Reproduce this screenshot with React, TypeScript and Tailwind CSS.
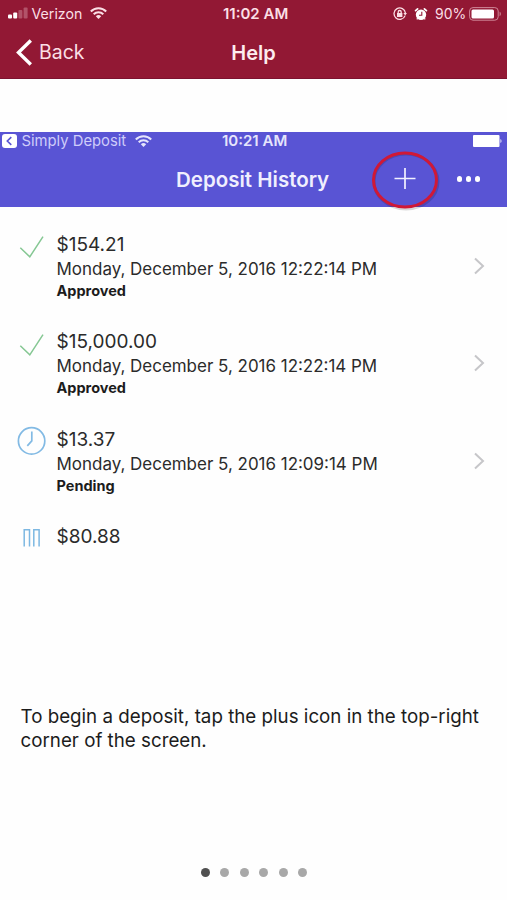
type DepositStatus = 'approved' | 'pending' | 'paused';

interface Deposit {
  amount: string;
  date?: string;
  label?: string;
  status: DepositStatus;
}

const deposits: Deposit[] = [
  { amount: '$154.21', date: 'Monday, December 5, 2016 12:22:14 PM', label: 'Approved', status: 'approved' },
  { amount: '$15,000.00', date: 'Monday, December 5, 2016 12:22:14 PM', label: 'Approved', status: 'approved' },
  { amount: '$13.37', date: 'Monday, December 5, 2016 12:09:14 PM', label: 'Pending', status: 'pending' },
  { amount: '$80.88', status: 'paused' },
];

function Wifi({ className }: { className: string }) {
  return (
    <svg viewBox="0 0 17 12" className={className} fill="none" stroke="currentColor" strokeWidth="2">
      <path d="M.8 4.5a10.8 10.8 0 0 1 15.4 0" />
      <path d="M3.7 7.3a6.8 6.8 0 0 1 9.6 0" />
      <path d="M8.5 12 5.8 9.3a3.8 3.8 0 0 1 5.4 0Z" fill="currentColor" stroke="none" />
    </svg>
  );
}

function StatusIcon({ status }: { status: DepositStatus }) {
  if (status === 'approved') {
    return (
      <svg viewBox="0 0 30 30" className="h-[30px] w-[30px]" fill="none" stroke="#85c793" strokeWidth="1.5">
        <path d="m4.3 17.8 9.5 9L27 6.7" />
      </svg>
    );
  }
  if (status === 'pending') {
    return (
      <svg viewBox="0 0 30 30" className="h-[30px] w-[30px]" fill="none" stroke="#82bae4" strokeWidth="1.7">
        <circle cx="15.6" cy="15.9" r="13.2" />
        <path d="M15.8 6.5v9.4l-4.5 5" />
      </svg>
    );
  }
  return (
    <svg viewBox="0 0 30 30" className="h-[30px] w-[30px]" fill="none" stroke="#7db8e2" strokeWidth="1.5">
      <path d="M8.2 23.5V6.8h5.3v16.7M17.8 23.5V6.8h5.3v16.7" />
    </svg>
  );
}

function DepositRow({ deposit }: { deposit: Deposit }) {
  return (
    <li className="flex h-[97.5px] items-start pl-4 pr-[22px]">
      <div className="mt-[9px] w-[40.5px] shrink-0">
        <StatusIcon status={deposit.status} />
      </div>
      <div className="min-w-0 flex-1 whitespace-nowrap text-[#2b2b2b]">
        <p className="mt-[10.5px] text-[19px] leading-[26px]">{deposit.amount}</p>
        <p className="text-[16.97px] leading-[23px]">{deposit.date}</p>
        <p className="-mt-[1px] text-[14.5px] font-bold leading-[21px] text-[#1c1c1c]">{deposit.label}</p>
      </div>
      {deposit.date && (
        <svg viewBox="0 0 11 18" className="mt-[35.5px] h-[18px] w-[11px]" fill="none" stroke="#c6c6c9" strokeWidth="2">
          <path d="m1 1.5 8 7.5-8 7.5" />
        </svg>
      )}
    </li>
  );
}

export default function App() {
  return (
    <div className="flex h-[900px] w-[507px] flex-col overflow-hidden bg-[#fefefe] font-['Inter','Liberation_Sans',sans-serif]">
      <header className="h-[79px] border-b border-[#7d1230] bg-[#921834] text-[#fbdfe5]">
        <div className="flex h-[27px] items-center whitespace-nowrap pl-2 pr-[5px]">
          <div className="flex w-[215px] items-center">
            <svg viewBox="0 0 20 12" className="h-3 w-5" fill="currentColor">
              <rect x="0" y="7.5" width="4" height="4" rx="1" fill="#fff" />
              <rect x="5.2" y="5.5" width="4" height="6" rx="1" fill="#fff" />
              <rect x="10.4" y="3" width="4" height="8.5" rx="1" opacity=".3" />
              <rect x="15.6" y="0.5" width="4" height="11" rx="1" opacity=".3" />
            </svg>
            <span className="ml-[3.5px] w-[58px] text-[14.2px]">Verizon</span>
            <Wifi className="h-3 w-[17px]" />
          </div>
          <span className="pt-[2px] text-[15px] font-semibold">11:02 AM</span>
          <div className="ml-auto flex items-center">
            <svg viewBox="0 0 14 14" className="h-3.5 w-3.5" fill="none" stroke="currentColor" strokeWidth="1.3">
              <path d="M12.1 8.6A5.7 5.7 0 1 1 12.4 6" />
              <path d="M10.4 6h3.6l-1.8 2.4Z" fill="currentColor" stroke="none" />
              <rect x="4" y="6" width="5.4" height="4" fill="currentColor" stroke="none" />
              <path d="M5.2 6.2V5a1.5 1.5 0 0 1 3 0v1.2" />
            </svg>
            <svg viewBox="0 0 14 14" className="ml-[7px] h-3.5 w-3.5" fill="none" stroke="#fff">
              <circle cx="7" cy="7.7" r="5.2" fill="#fff" stroke="none" />
              <path d="M1.6 3.6 3.6 1.9M12.4 3.6 10.4 1.9" strokeWidth="1.8" strokeLinecap="round" />
              <path d="m3.6 11.4-.8 1M10.4 11.4l.8 1" strokeWidth="1.3" />
              <path d="M7.8 4.8v3.4H5" stroke="#921834" strokeWidth="1.1" />
            </svg>
            <span className="ml-[7px] w-[34px] text-[14px]">90%</span>
            <svg viewBox="0 0 33 14" className="h-3.5 w-[33px]">
              <rect x=".6" y=".6" width="28.6" height="12.6" rx="3.4" fill="none" stroke="#cf8797" />
              <rect x="2.5" y="2.4" width="22.5" height="9" rx="1.5" fill="#fff" />
              <path d="M30.6 4.8c1.6.6 1.6 3.8 0 4.4Z" fill="#cf8797" />
            </svg>
          </div>
        </div>
        <div className="grid h-[51px] grid-cols-[1fr_auto_1fr] items-center px-4">
          <div className="flex items-center gap-[6px]">
            <svg viewBox="0 0 17 27" className="h-[27px] w-[17px]" fill="none" stroke="#fff" strokeWidth="3.4">
              <path d="M14.8 1.5 2.5 13.5l12.3 12" />
            </svg>
            <span className="pt-[1px] text-[19.5px]">Back</span>
          </div>
          <h1 className="text-[20px] font-semibold text-[#fdecef]">Help</h1>
        </div>
      </header>

      <main className="flex flex-1 flex-col">
        <section className="mt-[53px] h-[75px] bg-[#5954d4] text-[#e6e5fc]">
          <div className="flex h-[17px] items-center whitespace-nowrap pl-[2px] pr-[5px]">
            <div className="flex w-[220px] items-center">
              <svg viewBox="0 0 15 14" className="h-3.5 w-[15px]" fill="none">
                <rect width="15" height="14" rx="3" fill="#fff" />
                <path d="M9.3 3.2 5.3 7l4 3.8" stroke="#5954d4" strokeWidth="1.6" />
              </svg>
              <span className="ml-[4.5px] w-[113px] pt-[1px] text-[14.8px] leading-[18px] text-[#cfcdfa]">Simply Deposit</span>
              <Wifi className="h-3 w-[17px]" />
            </div>
            <span className="pt-[2px] text-[15px] font-semibold">10:21 AM</span>
            <svg viewBox="0 0 29 12" className="ml-auto h-3 w-[29px]" fill="#fff">
              <rect width="26.5" height="12" rx="1" />
              <path d="M27.5 4c1.3.5 1.3 3.5 0 4Z" />
            </svg>
          </div>
          <div className="flex h-[58px] items-center pl-[176px] pt-[2px]">
            <h2 className="w-[195px] whitespace-nowrap pt-[3px] text-[20.5px] font-semibold text-[#f0effe]">Deposit History</h2>
            <svg viewBox="0 0 70 62" className="h-[62px] w-[70px] shrink-0 overflow-visible" fill="none">
              <ellipse cx="35" cy="33.5" rx="32" ry="27.5" stroke="#000" strokeOpacity=".15" strokeWidth="3" />
              <ellipse cx="34" cy="32" rx="31.5" ry="27" stroke="#d01836" strokeWidth="3" />
              <path d="M23.5 30.5h21M34 20v21" stroke="#f2f1ff" strokeWidth="1.7" />
            </svg>
            <div className="ml-[15.5px] flex gap-[3.7px]">
              <span className="h-[5.5px] w-[5.5px] rounded-full bg-white" />
              <span className="h-[5.5px] w-[5.5px] rounded-full bg-white" />
              <span className="h-[5.5px] w-[5.5px] rounded-full bg-white" />
            </div>
          </div>
        </section>

        <ul className="mt-[14px]">
          {deposits.map((deposit, i) => (
            <DepositRow key={i} deposit={deposit} />
          ))}
        </ul>

        <p className="mt-[94px] whitespace-nowrap pl-[20.5px] text-[18.75px] leading-[23.5px] text-[#1c1c1c]">
          To begin a deposit, tap the plus icon in the top-right
          <br />
          corner of the screen.
        </p>

        <div className="mb-[23px] mt-auto flex gap-[10.5px] pl-[200.5px]">
          {[0, 1, 2, 3, 4, 5].map((page) => (
            <span
              key={page}
              className={`h-[9px] w-[9px] rounded-full ${page === 0 ? 'bg-[#505050]' : 'bg-[#a8a8a8]'}`}
            />
          ))}
        </div>
      </main>
    </div>
  );
}
